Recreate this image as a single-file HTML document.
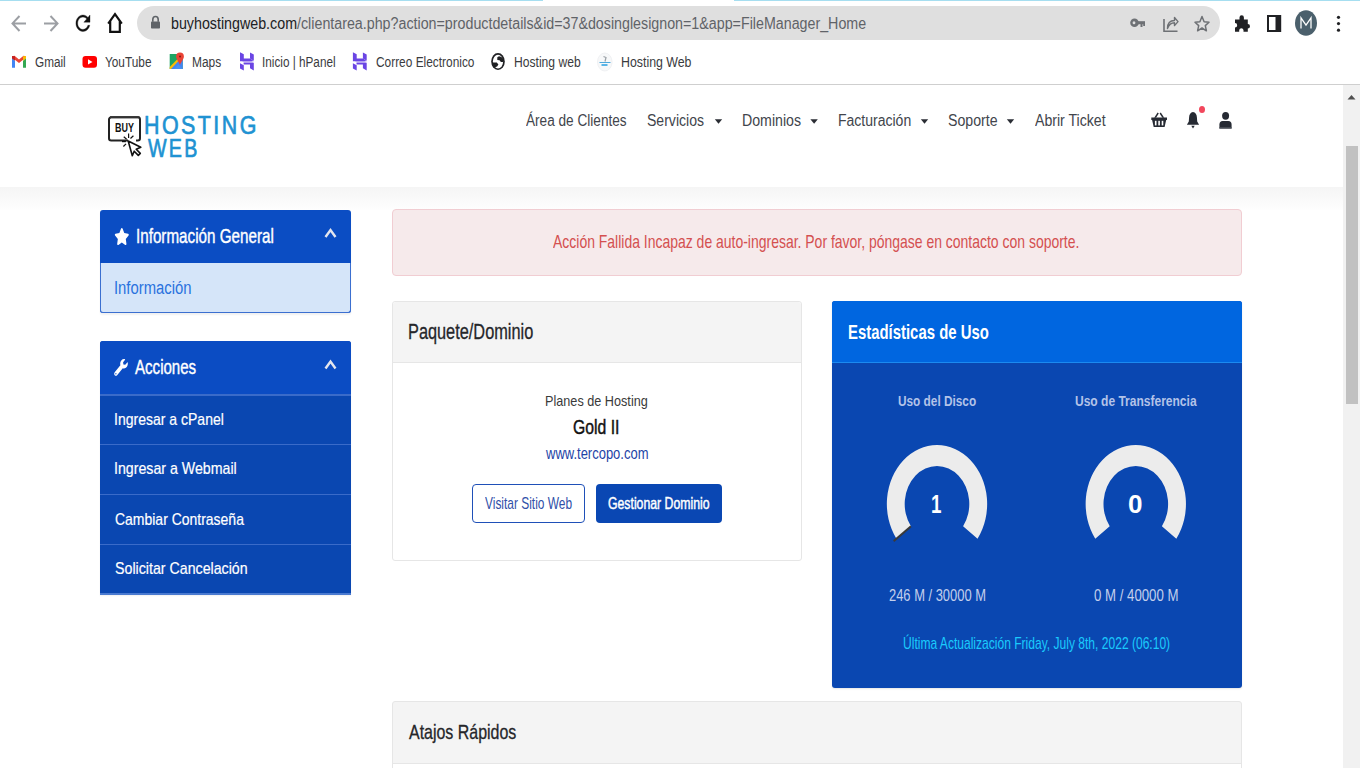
<!DOCTYPE html>
<html><head><meta charset="utf-8">
<style>
html,body{margin:0;padding:0;width:1360px;height:768px;overflow:hidden;background:#fff;font-family:"Liberation Sans",sans-serif;}
.a{position:absolute;}
svg{position:absolute;overflow:visible;}
</style></head><body>
<!-- chrome toolbar -->
<div class="a" style="left:0;top:0;width:1360px;height:85px;background:#fff"></div>
<div class="a" style="left:0;top:0;width:543px;height:1px;background:#a6def0"></div>
<div class="a" style="left:734px;top:0;width:626px;height:1px;background:#a6def0"></div>
<!-- omnibox -->
<div class="a" style="left:137px;top:6px;width:1083px;height:34px;border-radius:17px;background:#dfdfdf"></div>
<!-- bookmark bar bottom line -->
<div class="a" style="left:0;top:84px;width:1360px;height:1px;background:#cfcfcf"></div>

<!-- header -->
<div class="a" style="left:0;top:85px;width:1343px;height:102px;background:#fff"></div>
<div class="a" style="left:0;top:187px;width:1343px;height:23px;background:linear-gradient(#f5f5f5,#fefefe)"></div>

<!-- scrollbar -->
<div class="a" style="left:1343px;top:85px;width:17px;height:683px;background:#f1f1f1"></div>
<div class="a" style="left:1346px;top:146px;width:12px;height:258px;background:#c1c1c1"></div>

<!-- sidebar panel 1 -->
<div class="a" style="left:100px;top:210px;width:251px;height:103px;border-radius:3px;background:#0b4dc3;box-shadow:0 2px 2px rgba(0,0,0,0.06)"></div>
<div class="a" style="left:100px;top:263px;width:249px;height:49px;background:#d5e5f9;border:1px solid #3b6fd0;border-top:none;border-radius:0 0 3px 3px"></div>

<!-- sidebar panel 2 -->
<div class="a" style="left:100px;top:341px;width:251px;height:253px;border-radius:3px 3px 0 0;background:#0a47b1;box-shadow:0 2px 2px rgba(0,0,0,0.06)"></div>
<div class="a" style="left:100px;top:341px;width:251px;height:53px;border-radius:3px 3px 0 0;background:#0b4cc3"></div>
<div class="a" style="left:100px;top:394px;width:251px;height:2px;background:#3a6bc9"></div>
<div class="a" style="left:100px;top:444px;width:251px;height:1px;background:#3a6bc9"></div>
<div class="a" style="left:100px;top:494px;width:251px;height:1px;background:#3a6bc9"></div>
<div class="a" style="left:100px;top:544px;width:251px;height:1px;background:#3a6bc9"></div>
<div class="a" style="left:100px;top:593px;width:251px;height:2px;background:#4a7ad0"></div>

<!-- alert -->
<div class="a" style="left:392px;top:209px;width:848px;height:65px;border:1px solid #f1cdd2;border-radius:4px;background:#f6eaeb"></div>

<!-- card 1 -->
<div class="a" style="left:392px;top:301px;width:408px;height:258px;border:1px solid #e6e6e6;border-radius:3px;background:#fff"></div>
<div class="a" style="left:393px;top:302px;width:408px;height:60px;border-radius:3px 3px 0 0;background:#f4f4f4;border-bottom:1px solid #e6e6e6"></div>
<div class="a" style="left:472px;top:484px;width:111px;height:37px;border:1px solid #1f50b8;border-radius:4px;background:#fff"></div>
<div class="a" style="left:596px;top:484px;width:126px;height:39px;border-radius:4px;background:#0a47b3"></div>

<!-- card 2 stats -->
<div class="a" style="left:832px;top:301px;width:410px;height:387px;border-radius:3px;background:#0a47b1;box-shadow:0 1px 2px rgba(0,0,0,0.1)"></div>
<div class="a" style="left:832px;top:301px;width:410px;height:61px;border-radius:3px 3px 0 0;background:#0066e0;border-bottom:1px solid #1b8af0"></div>

<!-- card 3 -->
<div class="a" style="left:392px;top:701px;width:848px;height:80px;border:1px solid #e6e6e6;border-radius:3px;background:#f4f4f4"></div>
<div class="a" style="left:393px;top:763px;width:848px;height:10px;background:#fff;border-top:1px solid #e6e6e6"></div>


<!-- chrome nav icons -->
<svg style="left:0;top:0" width="1360" height="85" viewBox="0 0 1360 85">
 <g fill="none" stroke="#9c9fa4" stroke-width="2">
  <path d="M26 23.4H13.5M19.5 16L12.5 23.4L19.5 31"/>
  <path d="M44 23.4H56.5M50.5 16L57.5 23.4L50.5 31"/>
 </g>
 <path transform="translate(72.4 10.9) scale(0.88 1.03)" d="M17.65 6.35C16.2 4.9 14.21 4 12 4c-4.42 0-7.99 3.58-7.99 8s3.57 8 7.99 8c3.73 0 6.84-2.55 7.73-6h-2.08c-.82 2.33-3.04 4-5.65 4-3.31 0-6-2.69-6-6s2.69-6 6-6c1.66 0 3.14.69 4.22 1.78L13 11h7V4l-2.35 2.35z" fill="#111" stroke="#111" stroke-width="0.35"/>
 <path d="M108.2 23.6L115 14.2L121.8 23.6M110.2 21V31.8H119.8V21" fill="none" stroke="#111" stroke-width="2.2" stroke-linejoin="miter"/>
 <!-- lock -->
 <rect x="151" y="21.5" width="9" height="7" rx="0.8" fill="#5f6368"/>
 <path d="M152.8 21.8V19.5A2.7 3 0 0 1 158.2 19.5V21.8" fill="none" stroke="#5f6368" stroke-width="1.6"/>
 <!-- key -->
 <ellipse cx="1134.5" cy="22.7" rx="4.3" ry="4.3" fill="#6e7175"/>
 <ellipse cx="1134" cy="22.7" rx="1.4" ry="1.5" fill="#dfdfdf"/>
 <rect x="1137" y="21.2" width="8" height="3" fill="#6e7175"/>
 <rect x="1140.5" y="23" width="2" height="4" fill="#6e7175"/>
 <rect x="1143.2" y="23" width="1.8" height="3" fill="#6e7175"/>
 <!-- share -->
 <path d="M1164 19V31.3H1177.5" fill="none" stroke="#6e7175" stroke-width="1.6"/>
 <path d="M1167.5 28.5C1167.5 22.5 1170.5 20.5 1174.5 20.5V17.5L1178 21.6L1174.5 25.6V22.8C1171.5 22.8 1169 24.5 1167.5 28.5Z" fill="none" stroke="#6e7175" stroke-width="1.4" stroke-linejoin="round"/>
 <!-- star -->
 <path d="M1202 16.5L1204.1 21.8L1209 22.2L1205.3 25.6L1206.4 30.8L1202 28L1197.6 30.8L1198.7 25.6L1195 22.2L1199.9 21.8Z" fill="none" stroke="#6e7175" stroke-width="1.5" stroke-linejoin="round"/>
 <!-- puzzle -->
 <path d="M1235 19.5H1239.5V17.5A2.2 2.3 0 0 1 1243.9 17.5V19.5H1247.8V24A2.2 2.3 0 0 1 1247.8 28.6V31.8H1243.5V30A2.2 2.2 0 0 0 1239.2 30V31.8H1235V27.6A2.2 2.3 0 0 0 1235 23Z" fill="#202124"/>
 <!-- sidebar -->
 <rect x="1268" y="16" width="12.2" height="15" fill="none" stroke="#202124" stroke-width="2"/>
 <rect x="1275.5" y="16" width="4.7" height="15" fill="#202124"/>
 <!-- avatar -->
 <ellipse cx="1306" cy="23" rx="11" ry="12.8" fill="#4b606c"/>
 <path d="M1301 28.5V17.8L1306 25.2L1311 17.8V28.5" fill="none" stroke="#fff" stroke-width="1.3"/>
 <!-- kebab -->
 <circle cx="1338.5" cy="17.3" r="1.6" fill="#202124"/>
 <circle cx="1338.5" cy="23.6" r="1.6" fill="#202124"/>
 <circle cx="1338.5" cy="30.2" r="1.6" fill="#202124"/>
 <!-- bookmark icons -->
 <!-- gmail -->
 <path d="M12 57.5V67.8H15V60.8Z" fill="#4285f4"/>
 <path d="M26 57.5V67.8H23V60.8Z" fill="#34a853"/>
 <path d="M12 57.5L19 63L26 57.5V56.2L23.5 55.8L19 59.5L14.5 55.8L12 56.2Z" fill="#ea4335"/>
 <path d="M23 56.2L26 56V58.5L23 60.8Z" fill="#fbbc04"/>
 <path d="M12 56V58.5L15 60.8V56.2Z" fill="#c5221f"/>
 <!-- youtube -->
 <rect x="82.5" y="56" width="14.5" height="11.8" rx="3" fill="#f00"/>
 <path d="M88 59.3V64.5L92.5 61.9Z" fill="#fff"/>
 <!-- maps -->
 <rect x="169.7" y="54" width="13" height="15" fill="#1fa463"/>
 <path d="M169.7 69L182.7 57V69Z" fill="#4285f4"/>
 <path d="M169.7 67L178 58.5L179 60.5L171 69H169.7Z" fill="#fbbc04"/>
 <path d="M174 69L178.5 64.5L182.7 69Z" fill="#4a90f0"/>
 <path d="M180 52.5A3.9 4.1 0 0 1 183.9 56.6C183.9 59.5 180 63.5 180 65.5C180 63.5 176.1 59.5 176.1 56.6A3.9 4.1 0 0 1 180 52.5Z" fill="#ea4335"/>
 <circle cx="180" cy="56.6" r="1" fill="#7a1a14"/>
 <!-- hpanel x2 -->
 <g fill="#6a45e4" transform="translate(240 52.2)"><path d="M0 0L3.8 2V6.4H10.4L13.8 9H0Z"/><path d="M10 0.2L13.8 2.2V8.6L10 6.4Z"/><path d="M0 11L3.8 13V18.2L0 16.2Z"/><path d="M3.6 10.6H13.8V18.2L10 16V12.4H3.6Z"/><path d="M2 9.1H11.4L13.6 10.6H4.2Z" opacity="0.45"/></g>
 <g fill="#6a45e4" transform="translate(352.9 52.2)"><path d="M0 0L3.8 2V6.4H10.4L13.8 9H0Z"/><path d="M10 0.2L13.8 2.2V8.6L10 6.4Z"/><path d="M0 11L3.8 13V18.2L0 16.2Z"/><path d="M3.6 10.6H13.8V18.2L10 16V12.4H3.6Z"/><path d="M2 9.1H11.4L13.6 10.6H4.2Z" opacity="0.45"/></g>
 <!-- globe -->
 <ellipse cx="498" cy="61.5" rx="6.8" ry="8.4" fill="#202124"/>
 <ellipse cx="498" cy="61.6" rx="5.1" ry="6.8" fill="#fff"/>
 <path d="M497.3 57.3L499 56.2C501.5 56.8 503.3 58.2 503.4 59.2V62H500.9L499.5 60.3L497.3 60Z" fill="#202124"/>
 <path d="M492.9 62.5H496.8L498.4 64.4L497.3 66.3L495.1 67.6L492.9 66.3Z" fill="#202124"/>
 <!-- hosting web favicon -->
 <ellipse cx="604.8" cy="62" rx="7.3" ry="9" fill="#f7f8f9" stroke="#eceef0" stroke-width="0.8"/>
 <path d="M603.5 56.5L606 57.5L605 61.5" fill="none" stroke="#9aa0a6" stroke-width="1.2"/>
 <rect x="599.5" y="62" width="11" height="0.9" fill="#3aa0d8"/>
 <rect x="601.5" y="64" width="6" height="2" fill="#5ab4e6"/>
</svg>


<!-- page icons -->
<svg style="left:0;top:0" width="1360" height="768" viewBox="0 0 1360 768">
 <!-- logo box -->
 <path d="M128 140.5H111.2A2.2 2.2 0 0 1 109 138.3V119.5A2.2 2.2 0 0 1 111.2 117.3H137.8A2.2 2.2 0 0 1 140 119.5V138.3A2.2 2.2 0 0 1 137.8 140.5H136" fill="none" stroke="#222" stroke-width="2"/>
 <rect x="110" y="116.2" width="29.5" height="2" fill="#333"/>
 <!-- cursor -->
 <path d="M128.2 141L132.3 155.8L134.2 151.2L138.3 155.4L140.3 153.4L136.2 149.2L140.8 147.3Z" fill="#fff" stroke="#111" stroke-width="1.6" stroke-linejoin="round"/>
 <g stroke="#111" stroke-width="1.2">
  <path d="M126.6 139.3L123.8 136.8"/><path d="M128.6 137.9L128.6 133.6"/><path d="M130.5 138.5L133.4 135.8"/><path d="M125.9 141.6L122 141.6"/><path d="M126 143.8L123.4 146.5"/>
 </g>
 <!-- nav carets -->
 <g fill="#2a2d34">
  <path d="M714.8 119.3H722.2L718.5 123.8Z"/>
  <path d="M810.4 119.3H817.8L814.1 123.8Z"/>
  <path d="M920.8 119.3H928.2L924.5 123.8Z"/>
  <path d="M1006.8 119.3H1014.2L1010.5 123.8Z"/>
 </g>
 <!-- basket -->
 <g fill="#262a33">
  <path d="M1151.3 117.6H1167V120.1H1166.2L1164.6 126.9H1153.7L1152.1 120.1H1151.3Z"/>
  <path d="M1154.2 117.8L1157.6 112.6L1158.8 113.4L1156 117.8Z"/>
  <path d="M1164.2 117.8L1160.8 112.6L1159.6 113.4L1162.4 117.8Z"/>
 </g>
 <g fill="#fff">
  <rect x="1154.9" y="120.8" width="1.6" height="4.6"/><rect x="1158.3" y="120.8" width="1.6" height="4.6"/><rect x="1161.7" y="120.8" width="1.6" height="4.6"/>
 </g>
 <!-- bell -->
 <path d="M1193 111.9C1190.6 112.2 1189.2 114.4 1189.1 117.2L1188.8 121.5L1186.9 124.8H1199.1L1197.2 121.5L1196.9 117.2C1196.8 114.4 1195.4 112.2 1193 111.9Z" fill="#262a33"/>
 <path d="M1191.3 125.7H1194.7L1193 128.6Z" fill="#262a33"/>
 <ellipse cx="1202" cy="109.4" rx="3" ry="3.5" fill="#f2475c"/>
 <!-- user -->
 <ellipse cx="1225.6" cy="115.8" rx="3.5" ry="3.9" fill="#262a33"/>
 <path d="M1219.4 128.6V124.5C1219.4 122.3 1220.6 121 1222.6 121H1228.4C1230.4 121 1231.6 122.3 1231.6 124.5V128.6Z" fill="#262a33"/>
 <rect x="1219.4" y="127.2" width="12.2" height="1.4" fill="#4f535b"/>
 <!-- sidebar star -->
 <path transform="translate(114.3 228) scale(0.0261 0.0332)" d="M259.3 17.8L194 150.2 47.9 171.5c-26.2 3.8-36.7 36.1-17.7 54.6l105.7 103-25 145.5c-4.5 26.3 23.2 46 46.4 33.7L288 439.6l130.7 68.7c23.2 12.2 50.9-7.4 46.4-33.7l-25-145.5 105.7-103c19-18.5 8.5-50.8-17.7-54.6L382 150.2 316.7 17.8c-11.7-23.6-45.6-23.9-57.4 0z" fill="#fff"/>
 <!-- chevrons -->
 <path d="M325.5 237L330.5 230L335.5 237" fill="none" stroke="#e4e6ee" stroke-width="2.4"/>
 <path d="M325.5 368.5L330.5 361.5L335.5 368.5" fill="none" stroke="#e4e6ee" stroke-width="2.4"/>
 <!-- wrench -->
 <path transform="translate(114.2 359) scale(0.02666 0.0328)" d="M507.73 109.1c-2.24-9.03-13.54-12.09-20.12-5.51l-74.36 74.36-67.88-11.31-11.31-67.88 74.36-74.36c6.62-6.62 3.430-17.9-5.66-20.16-47.38-11.74-99.55.91-136.58 37.930-39.64 39.64-50.55 97.1-34.05 147.2L18.74 402.76c-24.99 24.99-24.99 65.51 0 90.5 24.99 24.99 65.51 24.99 90.5 0l213.21-213.21c50.12 16.71 107.47 5.68 147.37-34.22 37.07-37.07 49.7-89.32 37.91-136.73zM64 472c-13.25 0-24-10.75-24-24 0-13.26 10.750-24 24-24s24 10.74 24 24c0 13.25-10.75 24-24 24z" fill="#fff"/>
 <!-- gauges -->
 <g transform="translate(937 504) scale(0.85 1)">
  <path d="M-47.7 34.7A59 59 0 1 1 47.7 34.7L30.7 22.3A38 38 0 1 0 -30.7 22.3Z" fill="#ececec"/>
  <path d="M-51 37.2L-30.7 22.3" stroke="#3a3a3a" stroke-width="2.2"/>
 </g>
 <g transform="translate(1135.8 504) scale(0.85 1)">
  <path d="M-47.7 34.7A59 59 0 1 1 47.7 34.7L30.7 22.3A38 38 0 1 0 -30.7 22.3Z" fill="#ececec"/>
 </g>
 <!-- scrollbar arrow -->
 <path d="M1347.5 99.5L1351.5 95L1355.5 99.5Z" fill="#505050"/>
</svg>

<div style="position:absolute;white-space:nowrap;font-family:'Liberation Sans', sans-serif;font-size:16px;line-height:16px;color:#202124;font-weight:400;left:170.91px;top:16.00px;transform:scaleX(0.8911);transform-origin:0 0">buyhostingweb.com<span style="color:#5f6368">/clientarea.php?action=productdetails&amp;id=37&amp;dosinglesignon=1&amp;app=FileManager_Home</span></div>
<div style="position:absolute;white-space:nowrap;font-family:'Liberation Sans', sans-serif;font-size:15.5px;line-height:15.5px;color:#3a3b3e;font-weight:400;left:34.64px;top:54.03px;transform:scaleX(0.7590);transform-origin:0 0">Gmail</div>
<div style="position:absolute;white-space:nowrap;font-family:'Liberation Sans', sans-serif;font-size:15.5px;line-height:15.5px;color:#3a3b3e;font-weight:400;left:105.24px;top:54.03px;transform:scaleX(0.7627);transform-origin:0 0">YouTube</div>
<div style="position:absolute;white-space:nowrap;font-family:'Liberation Sans', sans-serif;font-size:15.5px;line-height:15.5px;color:#3a3b3e;font-weight:400;left:191.73px;top:54.03px;transform:scaleX(0.7703);transform-origin:0 0">Maps</div>
<div style="position:absolute;white-space:nowrap;font-family:'Liberation Sans', sans-serif;font-size:15.5px;line-height:15.5px;color:#3a3b3e;font-weight:400;left:262.24px;top:54.03px;transform:scaleX(0.7579);transform-origin:0 0">Inicio | hPanel</div>
<div style="position:absolute;white-space:nowrap;font-family:'Liberation Sans', sans-serif;font-size:15.5px;line-height:15.5px;color:#3a3b3e;font-weight:400;left:375.53px;top:54.03px;transform:scaleX(0.7669);transform-origin:0 0">Correo Electronico</div>
<div style="position:absolute;white-space:nowrap;font-family:'Liberation Sans', sans-serif;font-size:15.5px;line-height:15.5px;color:#3a3b3e;font-weight:400;left:513.92px;top:54.03px;transform:scaleX(0.7810);transform-origin:0 0">Hosting web</div>
<div style="position:absolute;white-space:nowrap;font-family:'Liberation Sans', sans-serif;font-size:15.5px;line-height:15.5px;color:#3a3b3e;font-weight:400;left:620.60px;top:54.03px;transform:scaleX(0.7966);transform-origin:0 0">Hosting Web</div>
<div style="position:absolute;white-space:nowrap;font-family:'Liberation Sans', sans-serif;font-size:16px;line-height:16px;color:#42454c;font-weight:400;left:526.20px;top:112.70px;transform:scaleX(0.8508);transform-origin:0 0">Área de Clientes</div>
<div style="position:absolute;white-space:nowrap;font-family:'Liberation Sans', sans-serif;font-size:16px;line-height:16px;color:#42454c;font-weight:400;left:646.72px;top:112.70px;transform:scaleX(0.8781);transform-origin:0 0">Servicios</div>
<div style="position:absolute;white-space:nowrap;font-family:'Liberation Sans', sans-serif;font-size:16px;line-height:16px;color:#42454c;font-weight:400;left:741.82px;top:112.70px;transform:scaleX(0.8846);transform-origin:0 0">Dominios</div>
<div style="position:absolute;white-space:nowrap;font-family:'Liberation Sans', sans-serif;font-size:16px;line-height:16px;color:#42454c;font-weight:400;left:837.62px;top:112.70px;transform:scaleX(0.8756);transform-origin:0 0">Facturación</div>
<div style="position:absolute;white-space:nowrap;font-family:'Liberation Sans', sans-serif;font-size:16px;line-height:16px;color:#42454c;font-weight:400;left:947.52px;top:112.70px;transform:scaleX(0.8836);transform-origin:0 0">Soporte</div>
<div style="position:absolute;white-space:nowrap;font-family:'Liberation Sans', sans-serif;font-size:16px;line-height:16px;color:#42454c;font-weight:400;left:1034.70px;top:112.70px;transform:scaleX(0.8825);transform-origin:0 0">Abrir Ticket</div>
<div style="position:absolute;white-space:nowrap;font-family:'Liberation Sans', sans-serif;font-size:20.3px;line-height:20.3px;color:#ffffff;font-weight:400;-webkit-text-stroke:0.4px #fff;left:136.00px;top:226.34px;transform:scaleX(0.7500);transform-origin:0 0">Información General</div>
<div style="position:absolute;white-space:nowrap;font-family:'Liberation Sans', sans-serif;font-size:18px;line-height:18px;color:#2a72de;font-weight:400;left:114.35px;top:279.00px;transform:scaleX(0.8242);transform-origin:0 0">Información</div>
<div style="position:absolute;white-space:nowrap;font-family:'Liberation Sans', sans-serif;font-size:20.3px;line-height:20.3px;color:#ffffff;font-weight:400;-webkit-text-stroke:0.4px #fff;left:134.76px;top:357.35px;transform:scaleX(0.7432);transform-origin:0 0">Acciones</div>
<div style="position:absolute;white-space:nowrap;font-family:'Liberation Sans', sans-serif;font-size:17px;line-height:17px;color:#ffffff;font-weight:400;-webkit-text-stroke:0.2px #fff;left:114.15px;top:410.95px;transform:scaleX(0.8246);transform-origin:0 0">Ingresar a cPanel</div>
<div style="position:absolute;white-space:nowrap;font-family:'Liberation Sans', sans-serif;font-size:17px;line-height:17px;color:#ffffff;font-weight:400;-webkit-text-stroke:0.2px #fff;left:114.13px;top:460.15px;transform:scaleX(0.8347);transform-origin:0 0">Ingresar a Webmail</div>
<div style="position:absolute;white-space:nowrap;font-family:'Liberation Sans', sans-serif;font-size:17px;line-height:17px;color:#ffffff;font-weight:400;-webkit-text-stroke:0.2px #fff;left:114.98px;top:510.55px;transform:scaleX(0.8218);transform-origin:0 0">Cambiar Contraseña</div>
<div style="position:absolute;white-space:nowrap;font-family:'Liberation Sans', sans-serif;font-size:17px;line-height:17px;color:#ffffff;font-weight:400;-webkit-text-stroke:0.2px #fff;left:114.96px;top:560.15px;transform:scaleX(0.8357);transform-origin:0 0">Solicitar Cancelación</div>
<div style="position:absolute;white-space:nowrap;font-family:'Liberation Sans', sans-serif;font-size:18.4px;line-height:18.4px;color:#d45050;font-weight:400;left:553.40px;top:232.76px;transform:scaleX(0.7594);transform-origin:0 0">Acción Fallida Incapaz de auto-ingresar. Por favor, póngase en contacto con soporte.</div>
<div style="position:absolute;white-space:nowrap;font-family:'Liberation Sans', sans-serif;font-size:21.7px;line-height:21.7px;color:#25262a;font-weight:400;-webkit-text-stroke:0.3px #25262a;left:408.05px;top:320.96px;transform:scaleX(0.7527);transform-origin:0 0">Paquete/Dominio</div>
<div style="position:absolute;white-space:nowrap;font-family:'Liberation Sans', sans-serif;font-size:14.8px;line-height:14.8px;color:#3a3a3a;font-weight:400;left:545.14px;top:394.12px;transform:scaleX(0.8559);transform-origin:0 0">Planes de Hosting</div>
<div style="position:absolute;white-space:nowrap;font-family:'Liberation Sans', sans-serif;font-size:19.8px;line-height:19.8px;color:#111111;font-weight:400;-webkit-text-stroke:0.45px #111;left:573.20px;top:417.67px;transform:scaleX(0.7964);transform-origin:0 0">Gold II</div>
<div style="position:absolute;white-space:nowrap;font-family:'Liberation Sans', sans-serif;font-size:16.9px;line-height:16.9px;color:#1d43a6;font-weight:400;left:545.70px;top:446.13px;transform:scaleX(0.7689);transform-origin:0 0">www.tercopo.com</div>
<div style="position:absolute;white-space:nowrap;font-family:'Liberation Sans', sans-serif;font-size:16.2px;line-height:16.2px;color:#3050a8;font-weight:400;left:484.90px;top:495.03px;transform:scaleX(0.7364);transform-origin:0 0">Visitar Sitio Web</div>
<div style="position:absolute;white-space:nowrap;font-family:'Liberation Sans', sans-serif;font-size:16.2px;line-height:16.2px;color:#ffffff;font-weight:400;-webkit-text-stroke:0.45px #fff;left:608.24px;top:495.03px;transform:scaleX(0.7576);transform-origin:0 0">Gestionar Dominio</div>
<div style="position:absolute;white-space:nowrap;font-family:'Liberation Sans', sans-serif;font-size:20.8px;line-height:20.8px;color:#ffffff;font-weight:700;left:848.03px;top:321.52px;transform:scaleX(0.7167);transform-origin:0 0">Estadísticas de Uso</div>
<div style="position:absolute;white-space:nowrap;font-family:'Liberation Sans', sans-serif;font-size:14.5px;line-height:14.5px;color:#b3c3e8;font-weight:700;left:898.19px;top:393.88px;transform:scaleX(0.8149);transform-origin:0 0">Uso del Disco</div>
<div style="position:absolute;white-space:nowrap;font-family:'Liberation Sans', sans-serif;font-size:14.5px;line-height:14.5px;color:#b3c3e8;font-weight:700;left:1074.77px;top:393.88px;transform:scaleX(0.8288);transform-origin:0 0">Uso de Transferencia</div>
<div style="position:absolute;white-space:nowrap;font-family:'Liberation Sans', sans-serif;font-size:25px;line-height:25px;color:#ffffff;font-weight:700;left:931.25px;top:492.15px;transform:scaleX(0.7500);transform-origin:0 0">1</div>
<div style="position:absolute;white-space:nowrap;font-family:'Liberation Sans', sans-serif;font-size:25px;line-height:25px;color:#ffffff;font-weight:700;left:1128.36px;top:492.15px;transform:scaleX(1.0417);transform-origin:0 0">0</div>
<div style="position:absolute;white-space:nowrap;font-family:'Liberation Sans', sans-serif;font-size:16px;line-height:16px;color:#c3cfec;font-weight:400;left:888.89px;top:588.00px;transform:scaleX(0.8076);transform-origin:0 0">246 M / 30000 M</div>
<div style="position:absolute;white-space:nowrap;font-family:'Liberation Sans', sans-serif;font-size:16px;line-height:16px;color:#c3cfec;font-weight:400;left:1093.57px;top:588.00px;transform:scaleX(0.8260);transform-origin:0 0">0 M / 40000 M</div>
<div style="position:absolute;white-space:nowrap;font-family:'Liberation Sans', sans-serif;font-size:16.4px;line-height:16.4px;color:#1acbfd;font-weight:400;left:902.76px;top:634.66px;transform:scaleX(0.7355);transform-origin:0 0">Última Actualización Friday, July 8th, 2022 (06:10)</div>
<div style="position:absolute;white-space:nowrap;font-family:'Liberation Sans', sans-serif;font-size:21px;line-height:21px;color:#25262a;font-weight:400;-webkit-text-stroke:0.3px #25262a;left:408.50px;top:721.25px;transform:scaleX(0.7596);transform-origin:0 0">Atajos Rápidos</div>
<div style="position:absolute;white-space:nowrap;font-family:'Liberation Sans', sans-serif;font-size:26px;line-height:26px;color:#2092d2;font-weight:400;letter-spacing:3px;-webkit-text-stroke:0.7px #2092d2;left:143.85px;top:112.15px;transform:scaleX(0.8233);transform-origin:0 0">HOSTING</div>
<div style="position:absolute;white-space:nowrap;font-family:'Liberation Sans', sans-serif;font-size:26px;line-height:26px;color:#2092d2;font-weight:400;letter-spacing:3px;-webkit-text-stroke:0.7px #2092d2;left:147.50px;top:134.65px;transform:scaleX(0.7578);transform-origin:0 0">WEB</div>
<div style="position:absolute;white-space:nowrap;font-family:'Liberation Sans', sans-serif;font-size:12px;line-height:12px;color:#111111;font-weight:700;left:114.75px;top:122.40px;transform:scaleX(0.7458);transform-origin:0 0">BUY</div>
</body></html>
